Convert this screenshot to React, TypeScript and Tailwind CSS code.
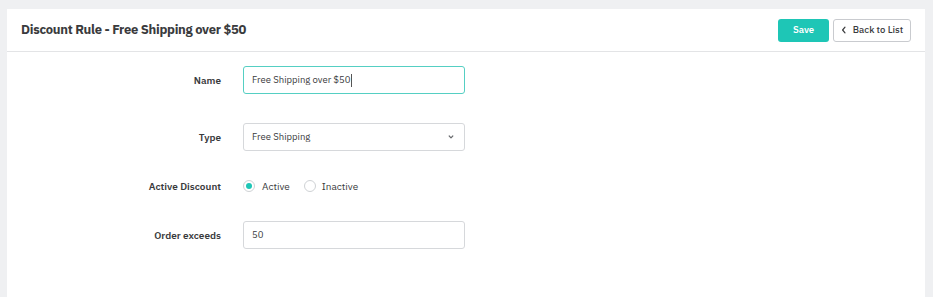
import React from "react";

export default function App() {
  const font = { fontFamily: '"IBM Plex Sans", Inter, "Open Sans", sans-serif' };
  return (
    <div className="w-[933px] h-[297px] bg-[#eff0f2] overflow-hidden pt-[9px] pl-[7px]" style={font}>
      <div className="w-[918px] h-[300px] bg-white">
        <div className="h-[43px] flex items-center justify-between pl-[14px] pr-[14px] border-b border-[#e3e4e6]">
          <h1 className="text-[13px] font-bold text-[#3a3b3d] tracking-[-0.3px]">Discount Rule - Free Shipping over $50</h1>
          <div className="flex items-center gap-[4px]">
            <button className="h-[23px] w-[51px] rounded-[3px] bg-[#1ec6b6] text-white text-[9.5px] font-semibold">Save</button>
            <button className="h-[23px] w-[78px] rounded-[3px] border border-[#c9cbcf] bg-white text-[#3a3b3d] text-[9.5px] font-medium flex items-center justify-center gap-[6px]">
              <svg width="6" height="8" viewBox="0 0 6 8" fill="none">
                <path d="M4 1.2 L1.6 4 L4 6.8" stroke="#3a3b3d" strokeWidth="1.2" strokeLinecap="round" strokeLinejoin="round" />
              </svg>
              Back to List
            </button>
          </div>
        </div>
        <div className="pt-[14px] flex flex-col">
          <div className="flex items-center">
            <label className="w-[214px] text-right text-[10px] font-semibold text-[#3a3b3d]">Name</label>
            <div className="ml-[22px] w-[222px] h-[28px] rounded-[3px] border border-[#55cfc3] flex items-center px-[8px] text-[9.5px] text-[#3a3b3d]">
              Free Shipping over $50<span className="inline-block w-px h-[13px] bg-[#555] ml-[1px]"></span>
            </div>
          </div>
          <div className="flex items-center mt-[29px]">
            <label className="w-[214px] text-right text-[10px] font-semibold text-[#3a3b3d]">Type</label>
            <div className="ml-[22px] w-[222px] h-[28px] rounded-[3px] border border-[#d6d8db] flex items-center justify-between px-[8px] text-[9.5px] text-[#3a3b3d]">
              <span>Free Shipping</span>
              <svg width="8" height="6" viewBox="0 0 8 6" fill="none" className="mr-[1px]">
                <path d="M2.2 2 L4 3.8 L5.8 2" stroke="#6b6d70" strokeWidth="1.2" strokeLinecap="round" strokeLinejoin="round" />
              </svg>
            </div>
          </div>
          <div className="flex items-center mt-[25px] h-[20px]">
            <label className="w-[214px] text-right text-[10px] font-semibold text-[#3a3b3d]">Active Discount</label>
            <div className="ml-[22px] flex items-center text-[10px] text-[#3a3b3d]">
              <span className="w-[12px] h-[12px] rounded-full border border-[#cfd2d5] flex items-center justify-center">
                <span className="w-[6px] h-[6px] rounded-full bg-[#1ec6b6]"></span>
              </span>
              <span className="ml-[7px]">Active</span>
              <span className="ml-[14px] w-[12px] h-[12px] rounded-full border border-[#cfd2d5]"></span>
              <span className="ml-[6px]">Inactive</span>
            </div>
          </div>
          <div className="flex items-center mt-[25px]">
            <label className="w-[214px] text-right text-[10px] font-semibold text-[#3a3b3d]">Order exceeds</label>
            <div className="ml-[22px] w-[222px] h-[28px] rounded-[3px] border border-[#d6d8db] flex items-center px-[8px] text-[9.5px] text-[#3a3b3d]">
              50
            </div>
          </div>
        </div>
      </div>
    </div>
  );
}
